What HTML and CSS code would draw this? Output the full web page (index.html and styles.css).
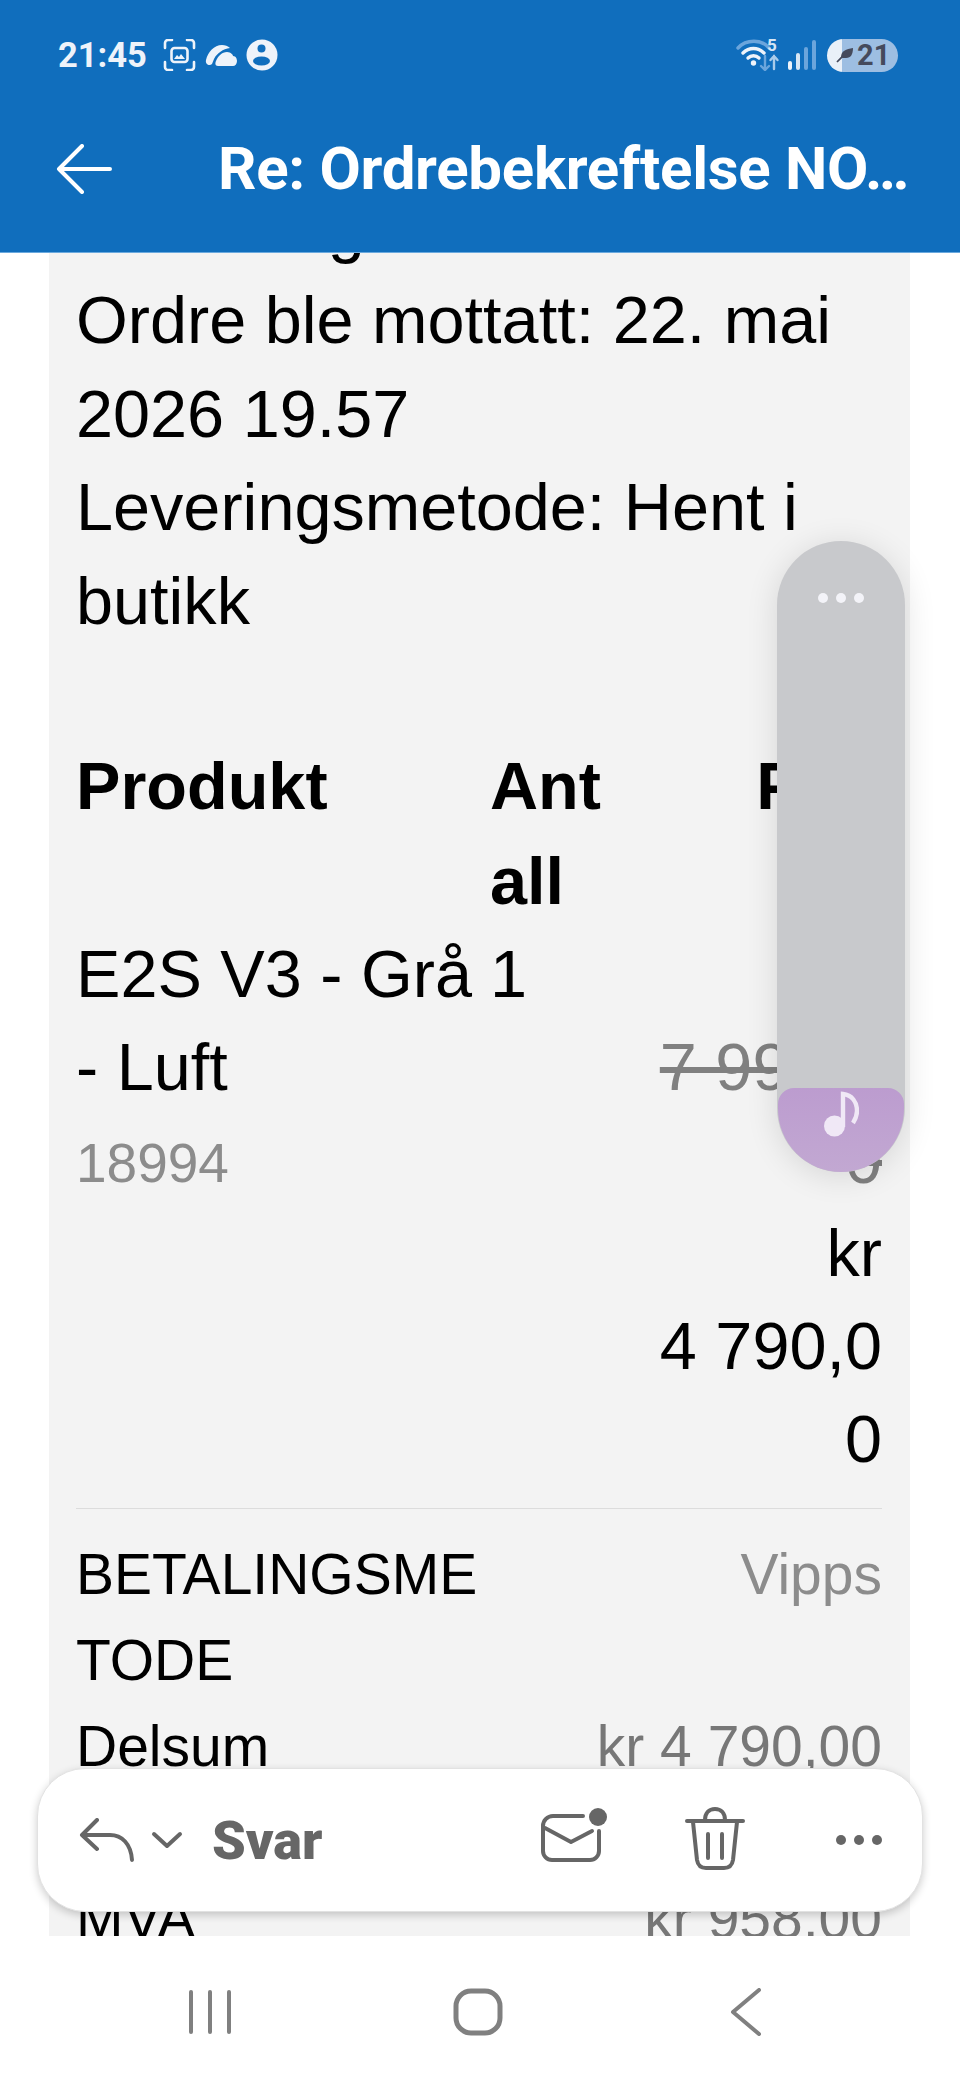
FILE: index.html
```html
<!DOCTYPE html>
<html lang="nb">
<head>
    <meta charset="UTF-8">
    <title>Re: Ordrebekreftelse</title>
    <link rel="stylesheet" href="styles.css">
</head>
<body>
    <div class="screen">
        <header class="top">
            <div class="status">
                <span class="clock">21:45</span>
                <svg class="st-shot" width="33" height="32" viewBox="0 0 33 32" fill="none" stroke="#eef3fa" stroke-width="2.6" stroke-linecap="round">
                    <path d="M2 9V4a3 3 0 0 1 3-3h4M24 1h4a3 3 0 0 1 3 3v5M31 23v5a3 3 0 0 1-3 3h-4M9 31H5a3 3 0 0 1-3-3v-5"/>
                    <rect x="8.5" y="9" width="16" height="14" rx="3"/>
                    <path d="M11 20l3-4 2 2 2-3 4 5z" fill="#eef3fa" stroke="none"/>
                </svg>
                <svg class="st-cloud" width="34" height="24" viewBox="0 0 34 24" fill="#eef3fa">
                    <path d="M2 17C4 9 10 2 18 2c3 0 6 1 8 3-7 1-13 5-16 11l-2 5c-2 2-7 1-6-4z"/>
                    <path d="M14 23c-3 0-3-3-2-5 2-5 6-9 11-9 4 0 6 3 6 4 3 0 4 3 4 5 0 3-2 5-4 5z"/>
                </svg>
                <svg class="st-user" width="32" height="32" viewBox="0 0 32 32">
                    <circle cx="16" cy="16" r="15.5" fill="#eef3fa"/>
                    <circle cx="15.5" cy="9.5" r="4" fill="#106ebd"/>
                    <ellipse cx="15.5" cy="22" rx="8.5" ry="4.6" fill="#106ebd"/>
                </svg>
                <div class="status-right">
                    <svg class="st-wifi" width="44" height="32" viewBox="0 0 44 32" fill="none" stroke-linecap="round">
                        <path d="M2 9C10 0 26 0 33 9" stroke="#6ba5dc" stroke-width="3.4"/>
                        <path d="M7 14c6-6 15-6 21 0" stroke="#eef3fa" stroke-width="3.4"/>
                        <path d="M12 19c3-3 8-3 11 0" stroke="#eef3fa" stroke-width="3.4"/>
                        <circle cx="17.5" cy="24" r="2.7" fill="#eef3fa"/>
                        <path d="M29 17v14M25 27l4 4 4-4" stroke="#6ba5dc" stroke-width="2.4"/>
                        <path d="M38 30V17M34.5 21l3.5-4 3.5 4" stroke="#a9cbea" stroke-width="2.4"/>
                    </svg>
                    <span class="st-five">5</span>
                    <div class="bars">
                        <i class="bar bar-1"></i>
                        <i class="bar bar-2"></i>
                        <i class="bar bar-3"></i>
                        <i class="bar bar-4"></i>
                    </div>
                    <div class="battery">
                        <svg width="18" height="17" viewBox="0 0 18 17" fill="#454a5c">
                            <path d="M5 10C5 4 10 2 17 1c0 6-2 10-7 10-2 0-4 0-5-1z"/>
                            <path d="M1 15c3-4 6-6 10-8" stroke="#454a5c" stroke-width="1.6" fill="none"/>
                        </svg>
                        <span>21</span>
                    </div>
                </div>
            </div>
            <div class="appbar">
                <svg class="back" width="56" height="50" viewBox="0 0 56 50" fill="none" stroke="#fff" stroke-width="4" stroke-linecap="round" stroke-linejoin="round">
                    <path d="M26 2L3 25l23 23M3 25h51"/>
                </svg>
                <h1 class="subject">Re: Ordrebekreftelse NO…</h1>
            </div>
        </header>

        <main class="mail">
            <div class="sheet">
                <p class="line">Mottaking</p>
                <p class="line">Ordre ble mottatt: 22. mai 2026 19.57</p>
                <p class="line">Leveringsmetode: Hent i butikk</p>

                <table class="order">
                    <colgroup>
                        <col class="col-product">
                        <col class="col-qty">
                        <col class="col-price">
                    </colgroup>
                    <thead>
                        <tr>
                            <th>Produkt</th>
                            <th>Antall</th>
                            <th class="price">Pris</th>
                        </tr>
                    </thead>
                    <tbody>
                        <tr>
                            <td>E2S V3 - Grå - Luft<div class="sku">18994</div></td>
                            <td>1</td>
                            <td class="price"><br><s class="was">7&nbsp;990,00</s><br>kr<br>4&nbsp;790,00</td>
                        </tr>
                    </tbody>
                </table>

                <dl class="totals">
                    <dt>BETALINGSMETODE</dt><dd>Vipps</dd>
                    <dt>Delsum</dt><dd class="sum">kr 4 790,00</dd>
                    <dt>Frakt</dt><dd class="sum">kr 0,00</dd>
                    <dt>MVA</dt><dd class="sum">kr 958,00</dd>
                </dl>
            </div>
        </main>

        <nav class="navbar">
            <svg width="44" height="46" viewBox="0 0 44 46" fill="#808080">
                <rect x="1" y="1" width="4" height="44" rx="2"/>
                <rect x="20" y="1" width="4" height="44" rx="2"/>
                <rect x="39" y="1" width="4" height="44" rx="2"/>
            </svg>
            <svg width="50" height="48" viewBox="0 0 50 48" fill="none" stroke="#808080" stroke-width="5">
                <rect x="3" y="3" width="44" height="42" rx="15"/>
            </svg>
            <svg width="32" height="48" viewBox="0 0 32 48" fill="none" stroke="#808080" stroke-width="4" stroke-linecap="round" stroke-linejoin="round">
                <path d="M29 2L3 24l26 22"/>
            </svg>
        </nav>

        <!-- floating media panel -->
        <aside class="float-panel">
            <div class="float-dots"><i></i><i></i><i></i></div>
            <div class="float-music">
                <svg width="36" height="48" viewBox="0 0 36 48" fill="none">
                    <circle cx="11.5" cy="35" r="10.5" fill="#f0e8f6"/>
                    <path d="M20 36V3c9 1 14 8 14 17 0 5-2 9-4 12" stroke="#f0e8f6" stroke-width="4.4"/>
                </svg>
            </div>
        </aside>

        <!-- reply toolbar over the message -->
        <div class="replybar">
            <svg class="ic-reply" width="56" height="44" viewBox="0 0 56 44" fill="none" stroke="#666" stroke-width="4" stroke-linecap="round" stroke-linejoin="round">
                <path d="M18 2L3 17l15 14M3 17h28c12 0 21 9 22 25"/>
            </svg>
            <svg class="ic-chev" width="32" height="18" viewBox="0 0 32 18" fill="none" stroke="#666" stroke-width="4" stroke-linecap="round" stroke-linejoin="round">
                <path d="M3 3l13 12L29 3"/>
            </svg>
            <span class="reply-label">Svar</span>
            <svg class="ic-mail" width="68" height="58" viewBox="0 0 68 58" fill="none" stroke="#666" stroke-width="4" stroke-linecap="round" stroke-linejoin="round">
                <path d="M43 11H13A10 10 0 0 0 3 21v25a9 9 0 0 0 9 9h38a9 9 0 0 0 9-9V26"/>
                <path d="M5 23l26 14 21-11"/>
                <circle cx="58" cy="12" r="9" fill="#666" stroke="none"/>
            </svg>
            <svg class="ic-trash" width="62" height="64" viewBox="0 0 62 64" fill="none" stroke="#666" stroke-width="4" stroke-linecap="round" stroke-linejoin="round">
                <path d="M3 14h56"/>
                <path d="M21 13c0-7 4-11 10-11s10 4 10 11"/>
                <path d="M9 15l4 38c1 6 4 8 9 8h18c5 0 8-2 9-8l4-38"/>
                <path d="M24 27v24M38 27v24"/>
            </svg>
            <svg class="ic-more" width="48" height="12" viewBox="0 0 48 12" fill="#666">
                <circle cx="6" cy="6" r="5"/>
                <circle cx="24" cy="6" r="5"/>
                <circle cx="42" cy="6" r="5"/>
            </svg>
        </div>
    </div>
</body>
</html>
```

FILE: styles.css
```css
body {
    margin: 0;
    background: #fff;
    font-family: "Liberation Sans", Arial, sans-serif;
}

.screen {
    position: relative;
    display: flex;
    flex-direction: column;
    width: 960px;
    height: 2080px;
    overflow: hidden;
    background: #fff;
}

/* blue header: status bar + subject */
.top {
    flex: none;
    height: 252px;
    background: #106ebd;
    border-bottom: 1px solid #6aa9de;
    color: #fff;
    font-family: Roboto, "Liberation Sans", sans-serif;
}

.status {
    display: flex;
    align-items: center;
    height: 32px;
    padding: 39px 62px 0 58px;
}

.clock {
    font-size: 34.5px;
    font-weight: 700;
    color: #eef3fa;
}

.st-shot {
    margin-left: 16px;
}

.st-cloud {
    margin-left: 8px;
}

.st-user {
    margin-left: 8px;
}

.status-right {
    display: flex;
    align-items: center;
    margin-left: auto;
}

.st-five {
    width: 12px;
    margin: -20px 0 0 -13px;
    font-size: 17px;
    font-weight: 700;
    color: #d6e6f5;
}

.bars {
    display: flex;
    align-items: flex-end;
    gap: 4px;
    height: 30px;
    margin-left: 9px;
}

.bar {
    width: 4px;
    border-radius: 2px;
}

.bar-1 {
    height: 9px;
    background: #eef3fa;
}

.bar-2 {
    height: 17px;
    background: #d8e6f4;
}

.bar-3 {
    height: 23px;
    background: #6ba5dc;
}

.bar-4 {
    height: 30px;
    background: #6ba5dc;
}

.battery {
    display: flex;
    align-items: center;
    gap: 3px;
    box-sizing: border-box;
    width: 71px;
    height: 33px;
    margin-left: 11px;
    padding-left: 9px;
    border-radius: 17px;
    background: linear-gradient(90deg, #e9f0f8 15px, #9dbee2 15px);
    font-size: 29px;
    font-weight: 700;
    color: #454a5c;
}

.appbar {
    display: flex;
    align-items: center;
    height: 82px;
    margin-top: 57px;
    padding-left: 56px;
}

.subject {
    margin: -2px 0 0 106px;
    font-size: 60px;
    font-weight: 700;
    letter-spacing: -0.3px;
    white-space: nowrap;
}

/* message body, scrolled part way down */
.mail {
    flex: 1;
    min-height: 0;
    overflow: hidden;
    padding: 0 50px 0 49px;
}

.sheet {
    margin-top: -72px;
    padding: 0 28px 0 27px;
    background: #f3f3f3;
    color: #000;
    font-size: 66.6px;
    line-height: 93.4px;
}

.line {
    margin: 0;
}

.order {
    width: 100%;
    margin-top: 91px;
    border-collapse: collapse;
    table-layout: fixed;
    overflow-wrap: anywhere;
}

.col-product {
    width: 414px;
}

.col-qty {
    width: 140px;
}

.order th,
.order td {
    padding: 0;
    text-align: left;
    vertical-align: top;
}

.order th {
    line-height: 94.5px;
}

.order td {
    line-height: 93px;
}

.order .price {
    text-align: right;
}

.was {
    color: #808080;
}

.sku {
    margin-top: 3px;
    font-size: 55px;
    color: #8c8c8c;
}

.totals {
    display: grid;
    grid-template-columns: 412px 1fr;
    margin: 22px 0 0;
    padding-top: 22px;
    border-top: 1px solid #dcdcdc;
    font-size: 57px;
    line-height: 86px;
}

.totals dt {
    overflow-wrap: anywhere;
}

.totals dd {
    margin: 0;
    text-align: right;
    color: #8c8c8c;
}

.totals .sum {
    color: #777;
}

.navbar {
    flex: none;
    display: grid;
    grid-template-columns: repeat(3, 268px);
    justify-content: center;
    justify-items: center;
    align-items: center;
    height: 144px;
    padding: 8px 4px 0 0;
    box-sizing: border-box;
}

.float-panel {
    position: absolute;
    left: 777px;
    top: 541px;
    display: flex;
    flex-direction: column;
    justify-content: space-between;
    align-items: center;
    width: 128px;
    height: 631px;
    border-radius: 64px;
    background: #c8c9cc;
    box-shadow: 0 4px 32px rgba(0, 0, 0, 0.12);
}

.float-dots {
    display: flex;
    gap: 8px;
    margin-top: 52px;
}

.float-dots i {
    width: 10px;
    height: 10px;
    border-radius: 50%;
    background: #f3f3f8;
}

.float-music {
    display: flex;
    justify-content: center;
    box-sizing: border-box;
    width: 126px;
    height: 84px;
    border-radius: 16px 16px 63px 63px;
    background: linear-gradient(#bc9ccf, #c2a8d2);
}

.float-music svg {
    margin-top: 3px;
}

.replybar {
    position: absolute;
    left: 37px;
    top: 1768px;
    display: flex;
    align-items: center;
    box-sizing: border-box;
    width: 886px;
    height: 144px;
    padding: 0 39px 0 41px;
    border: 1px solid #e2e2e2;
    border-radius: 48px;
    background: #fff;
    box-shadow: 0 3px 8px rgba(0, 0, 0, 0.2);
}

.ic-chev {
    margin-left: 16px;
}

.reply-label {
    margin-left: 29px;
    font-family: Roboto, "Liberation Sans", sans-serif;
    font-size: 54px;
    font-weight: 900;
    color: #666;
}

.ic-mail {
    margin: -12px 0 0 auto;
}

.ic-trash {
    margin: -2px 0 0 76px;
}

.ic-more {
    margin-left: 89px;
}
```
